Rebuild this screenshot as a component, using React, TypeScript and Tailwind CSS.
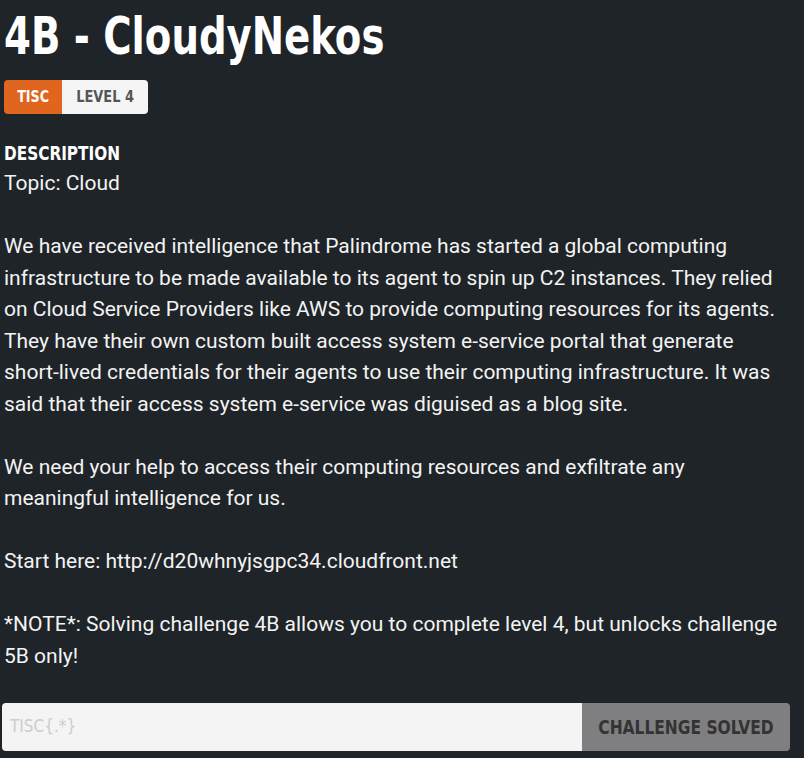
import React from "react";

const cond = "font-['DejaVu_Sans_Condensed','DejaVu_Sans',sans-serif]";

export default function App() {
  return (
    <div className="min-h-[758px] w-full bg-[#1f2428] px-1 pt-[6px] text-[#f3f3f3]">
      <h1 className={`${cond} origin-left scale-x-[0.826] whitespace-nowrap text-[52px] font-bold leading-[60px] text-white`}>
        4B - CloudyNekos
      </h1>
      <div className="mt-[14px] flex">
        <span className={`${cond} flex h-[34px] w-[58px] items-center justify-center rounded-l bg-[#e0651e] text-[16px] font-bold text-white`}>
          <span className="inline-block scale-x-[0.88]">TISC</span>
        </span>
        <span className={`${cond} flex h-[34px] w-[86px] items-center justify-center rounded-r bg-[#f5f5f5] text-[16px] font-bold text-[#555]`}>
          <span className="inline-block scale-x-[0.9]">LEVEL 4</span>
        </span>
      </div>
      <div className="mt-[28px] pr-[10px] font-['Roboto','Liberation_Sans',sans-serif] text-[21px] leading-[31.5px]">
        <div className={`${cond} mb-[4px] origin-left scale-x-[0.85] whitespace-nowrap text-[20px] font-bold leading-[22px] text-white`}>
          DESCRIPTION
        </div>
        <p>
          Topic: Cloud
          <br />
          <br />
          We have received intelligence that Palindrome has started a global computing infrastructure to be made
          available to its agent to spin up C2 instances. They relied on Cloud Service Providers like AWS to provide
          computing resources for its agents. They have their own custom built access system e-service portal that
          generate short-lived credentials for their agents to use their computing infrastructure. It was said that
          their access system e-service was diguised as a blog site.
          <br />
          <br />
          We need your help to access their computing resources and exfiltrate any meaningful intelligence for us.
          <br />
          <br />
          Start here: http://d20whnyjsgpc34.cloudfront.net
          <br />
          <br />
          *NOTE*: Solving challenge 4B allows you to complete level 4, but unlocks challenge 5B only!
        </p>
      </div>
      <div className="mt-[31px] ml-[-2px] mr-[10px] flex h-[48px] overflow-hidden rounded">
        <input
          className={`${cond} min-w-0 flex-1 bg-[#f4f4f4] px-2 text-[17px] text-[#333] outline-none placeholder:text-[#cdcdcd]`}
          placeholder="TISC{.*}"
        />
        <button className={`${cond} flex w-[208px] items-center justify-center bg-[#7f7e80] text-[20px] font-bold text-[#333]`}>
          <span className="inline-block scale-x-[0.86] whitespace-nowrap">CHALLENGE SOLVED</span>
        </button>
      </div>
    </div>
  );
}
